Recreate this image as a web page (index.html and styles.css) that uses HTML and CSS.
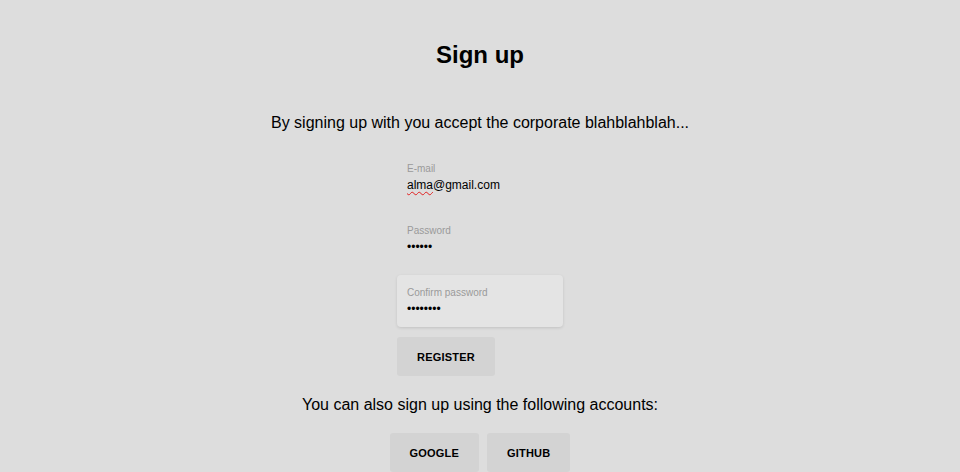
FILE: index.html
```html
<!DOCTYPE html>
<html lang="en">
<head>
<meta charset="utf-8">
<title>Sign up</title>
<link rel="stylesheet" href="styles.css">
</head>
<body>
<main class="page">
  <h1 class="title">Sign up</h1>
  <p class="intro">By signing up with you accept the corporate blahblahblah...</p>
  <form class="form">
    <div class="field">
      <span class="label">E-mail</span>
      <span class="value"><span class="misspelled">alma</span>@gmail.com</span>
    </div>
    <div class="field">
      <span class="label">Password</span>
      <span class="value">••••••</span>
    </div>
    <div class="field field-focused">
      <span class="label">Confirm password</span>
      <span class="value">••••••••</span>
    </div>
    <div class="actions">
      <button type="button" class="btn">REGISTER</button>
    </div>
  </form>
  <p class="alt">You can also sign up using the following accounts:</p>
  <div class="social">
    <button type="button" class="btn">GOOGLE</button>
    <button type="button" class="btn">GITHUB</button>
  </div>
</main>
</body>
</html>
```
FILE: styles.css
```css
html, body {
  margin: 0;
  padding: 0;
  background: #dddddd;
  font-family: "Liberation Sans", Arial, sans-serif;
  color: #000;
  overflow: hidden;
}
.page {
  display: flex;
  flex-direction: column;
  align-items: center;
  padding-top: 41px;
}
.title {
  margin: 0;
  font-size: 24px;
  line-height: 28px;
  font-weight: bold;
}
.intro {
  margin: 44px 0 0;
  font-size: 16px;
  line-height: 20px;
}
.form {
  margin-top: 18px;
  width: 166px;
  display: flex;
  flex-direction: column;
  gap: 10px;
}
.field {
  display: flex;
  flex-direction: column;
  gap: 3px;
  height: 52px;
  box-sizing: border-box;
  padding: 12px 10px 0;
  border-radius: 4px;
}
.field-focused {
  background: #e4e4e4;
  box-shadow: 0 1px 3px rgba(0, 0, 0, 0.12);
}
.label {
  font-size: 10px;
  line-height: 12px;
  color: #9a9a9a;
}
.value {
  font-size: 12px;
  line-height: 14px;
  color: #000;
}
.misspelled {
  text-decoration: underline wavy #e02020;
  text-decoration-thickness: 1px;
  text-underline-offset: 2px;
}
.actions {
  display: flex;
}
.btn {
  height: 39px;
  padding: 0 20px;
  border: 0;
  border-radius: 3px;
  background: #d3d3d3;
  font-family: "Liberation Sans", Arial, sans-serif;
  font-size: 11px;
  font-weight: bold;
  letter-spacing: 0.2px;
  color: #000;
}
.alt {
  margin: 19px 0 0;
  font-size: 16px;
  line-height: 20px;
}
.social {
  margin-top: 18px;
  display: flex;
  gap: 8px;
}
```
